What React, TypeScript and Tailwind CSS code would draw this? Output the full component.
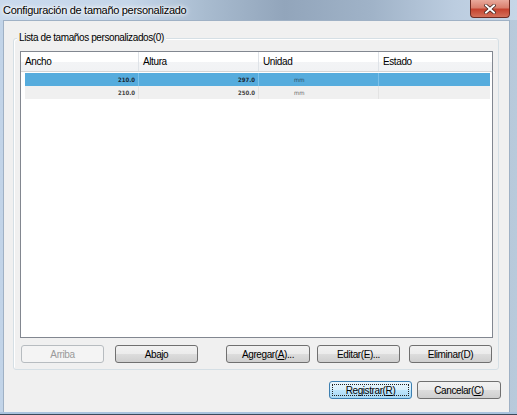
import React from "react";

const font = { fontFamily: '"Liberation Sans", Arial, sans-serif' };

function Btn({ children, disabled, def, className = "" }: { children: React.ReactNode; disabled?: boolean; def?: boolean; className?: string }) {
  if (disabled) {
    return (
      <div className={`h-[18px] rounded-[3px] border border-[#b7bcc0] bg-[#f4f4f4] flex items-center justify-center text-[10px] tracking-[-0.4px] text-[#9a9a9a] ${className}`}>
        {children}
      </div>
    );
  }
  return (
    <div
      className={`h-[18px] rounded-[3px] border ${def ? "border-[#3c7fb1]" : "border-[#707070]"} flex items-center justify-center text-[10px] tracking-[-0.4px] text-black relative overflow-hidden ${className}`}
      style={{ background: def ? "linear-gradient(#eaf6fd 0%, #d9f0fc 50%, #bee6fd 50%, #a7d9f5 100%)" : "linear-gradient(#f2f2f2 0%, #ebebeb 50%, #dddddd 50%, #cfcfcf 100%)" }}
    >
      {def && <div className="absolute inset-[2px] border border-dotted border-[#222]" />}
      <span className="relative">{children}</span>
    </div>
  );
}

export default function App() {
  return (
    <div className="w-[517px] h-[415px] flex flex-col overflow-hidden" style={{ ...font, background: "linear-gradient(90deg,#c2d4e8 0%,#b4c6db 40%,#a9bbd0 70%,#b9cadb 100%)" }}>
      {/* title bar */}
      <div className="h-[20px] shrink-0 flex items-start relative">
        <div
          className="absolute inset-0"
          style={{ background: "linear-gradient(90deg,#cadaed 0%,#c5d6e9 25%,#a8bbcf 40%,#92a5bb 55%,#a0b3c8 72%,#bccde0 88%,#c6d6e7 100%)" }}
        />
        <div className="relative pl-[3px] pt-[3px] text-[11px] tracking-[-0.3px] leading-[14px] text-black" style={{ textShadow: "0 0 6px #fff, 0 0 4px #fff, 0 0 2px #fff" }}>
          Configuración de tamaño personalizado
        </div>
        <div
          className="absolute left-[470px] top-0 w-[40px] h-[18px] rounded-b-[4px] border border-t-0 border-[#6e2b22] flex items-center justify-center"
          style={{ background: "linear-gradient(#e9a99b 0%,#d9806e 45%,#c5432f 55%,#d4705a 100%)" }}
        >
          <svg width="12" height="10" viewBox="0 0 12 10">
            <path d="M2 1.5 L10 8.5 M10 1.5 L2 8.5" stroke="#3a1a14" strokeWidth="3.4" strokeLinecap="square" />
            <path d="M2 1.5 L10 8.5 M10 1.5 L2 8.5" stroke="#ffffff" strokeWidth="2" strokeLinecap="square" />
          </svg>
        </div>
      </div>
      <div className="flex flex-1 min-h-0">
        <div className="w-[3px] shrink-0" />
        {/* client */}
        <div className="flex-1 bg-[#f0f0f0] border border-[#9fb1c5] border-b-0 flex flex-col">
          {/* group box */}
          <div className="ml-[9px] mt-[17px] w-[486px] h-[332px] relative border border-[#d5dfe5] rounded-[3px] shadow-[inset_1px_1px_0_#fff] flex flex-col px-[6px] pt-[12px]">
            <div className="absolute left-[3px] top-[-8px] bg-[#f0f0f0] px-[2px] text-[10px] tracking-[-0.4px] leading-[14px] text-black">
              Lista de tamaños personalizados(0)
            </div>
            {/* table */}
            <div className="w-[473px] h-[287px] border border-[#828790] bg-white flex flex-col">
              <div className="h-[20px] flex border-b border-[#d5d5d5] text-[10px] tracking-[-0.4px] text-black" style={{ background: "linear-gradient(#ffffff 0%,#ffffff 50%,#f3f4f6 50%,#f1f2f4 100%)" }}>
                <div className="w-[118px] border-r border-[#dfe3e8] pl-[4px] flex items-center">Ancho</div>
                <div className="w-[120px] border-r border-[#dfe3e8] pl-[4px] flex items-center">Altura</div>
                <div className="w-[120px] border-r border-[#dfe3e8] pl-[4px] flex items-center">Unidad</div>
                <div className="flex-1 pl-[4px] flex items-center">Estado</div>
              </div>
              <div className="pl-[4px] pr-[2px] pt-[1px] flex flex-col text-[6px] font-bold" style={{ fontFamily: '"DejaVu Sans Condensed","Liberation Sans",sans-serif' }}>
                <div className="h-[13px] flex bg-[#56acdd] text-[#1b2a36]">
                  <div className="w-[114px] border-r border-[#7cc0e8] pr-[3px] flex items-center justify-end">210.0</div>
                  <div className="w-[120px] border-r border-[#7cc0e8] pr-[3px] flex items-center justify-end">297.0</div>
                  <div className="w-[120px] border-r border-[#7cc0e8] pl-[35px] flex items-center font-normal text-[#2a4a60]">mm</div>
                  <div className="flex-1" />
                </div>
                <div className="h-[13px] flex bg-[#f0f0f0] text-[#444]">
                  <div className="w-[114px] border-r border-[#e3e3e3] pr-[3px] flex items-center justify-end">210.0</div>
                  <div className="w-[120px] border-r border-[#e3e3e3] pr-[3px] flex items-center justify-end">250.0</div>
                  <div className="w-[120px] border-r border-[#e3e3e3] pl-[35px] flex items-center font-normal text-[#666]">mm</div>
                  <div className="flex-1" />
                </div>
              </div>
            </div>
            <div className="flex mt-[7px] ml-[1px]">
              <Btn disabled className="w-[83px]">Arriba</Btn>
              <Btn className="w-[83px] ml-[11px]">Abajo</Btn>
              <Btn className="w-[84px] ml-[28px]">Agregar(<u>A</u>)...</Btn>
              <Btn className="w-[83px] ml-[7px]">Editar(E)...</Btn>
              <Btn className="w-[83px] ml-[9px]">Eliminar(D)</Btn>
            </div>
          </div>
          <div className="flex mt-[11px] ml-[325px]">
            <Btn def className="w-[83px]">Registrar(<u>R</u>)</Btn>
            <Btn className="w-[84px] ml-[5px]">Cancelar(<u>C</u>)</Btn>
          </div>
        </div>
        <div className="w-[7px] shrink-0" />
      </div>
      <div className="h-[3px] shrink-0 bg-[#aac3de] border-b border-[#3a4a5a]" />
    </div>
  );
}
